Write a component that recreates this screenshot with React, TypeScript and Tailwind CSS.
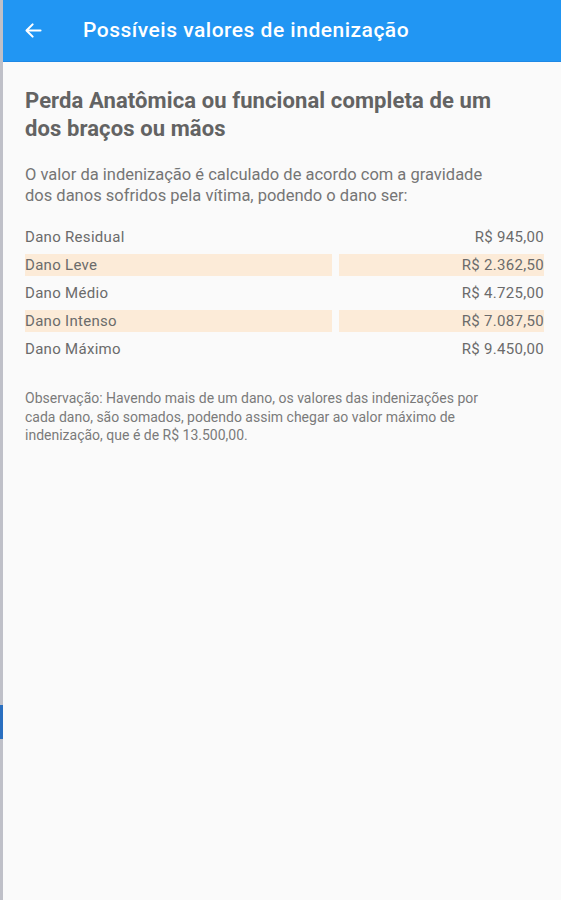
import React from "react";

/* =========================================================
   DATA
========================================================= */

const rows = [
  { label: "Dano Residual", value: "R$ 945,00" },
  { label: "Dano Leve", value: "R$ 2.362,50" },
  { label: "Dano Médio", value: "R$ 4.725,00" },
  { label: "Dano Intenso", value: "R$ 7.087,50" },
  { label: "Dano Máximo", value: "R$ 9.450,00" },
];

/* =========================================================
   COMPONENT
========================================================= */

export default function App() {
  return (
    <div
      className="flex h-[900px] w-[561px] overflow-hidden bg-[#fafafa]"
      style={{ fontFamily: "Roboto, 'Noto Sans', sans-serif" }}
    >
      {/* LEFT EDGE */}
      <div className="flex w-[3px] shrink-0 flex-col bg-[#bfc0c8]">
        <div className="mt-[705px] h-[34px] bg-[#2a6fc0]" />
      </div>

      <div className="flex flex-1 flex-col">
        {/* HEADER */}
        <header className="flex h-[62px] items-center border-b border-[#1e88e5] bg-[#2196f3] text-white">
          <svg
            viewBox="0 0 24 24"
            className="ml-[20px] h-[21px] w-[21px]"
            fill="none"
            stroke="currentColor"
            strokeWidth="2.4"
            strokeLinecap="round"
            strokeLinejoin="round"
          >
            <path d="M20 12H5" />
            <path d="M11 5l-7 7 7 7" />
          </svg>
          <h1 className="ml-[39px] text-[21px] font-medium tracking-[0.5px]">
            Possíveis valores de indenização
          </h1>
        </header>

        {/* CONTENT */}
        <main className="pl-[22px] pr-[17px] pt-[25px]">
          <h2 className="max-w-[485px] text-[22px] font-bold leading-[28px] tracking-[0.1px] text-[#636363]">
            Perda Anatômica ou funcional completa de um dos braços ou mãos
          </h2>

          <p className="mt-[21px] max-w-[485px] text-[16.5px] leading-[21px] text-[#757575]">
            O valor da indenização é calculado de acordo com a gravidade dos danos sofridos pela vítima, podendo o dano ser:
          </p>

          <div className="mt-[20px] flex flex-col gap-[6px] text-[15px] leading-[22px] tracking-[0.3px] text-[#6b6b6b]">
            {rows.map((row, i) => {
              const shaded = i % 2 === 1;
              return (
                <div key={row.label} className="flex gap-[7px]">
                  <div className={`w-[307px] ${shaded ? "bg-[#fcebd8]" : ""}`}>
                    {row.label}
                  </div>
                  <div className={`flex-1 text-right ${shaded ? "bg-[#fcebd8]" : ""}`}>
                    {row.value}
                  </div>
                </div>
              );
            })}
          </div>

          <p className="mt-[29px] max-w-[485px] text-[14px] leading-[18.5px] text-[#7a7a7a]">
            Observação: Havendo mais de um dano, os valores das indenizações por cada dano, são somados, podendo assim chegar ao valor máximo de indenização, que é de R$ 13.500,00.
          </p>
        </main>
      </div>
    </div>
  );
}
